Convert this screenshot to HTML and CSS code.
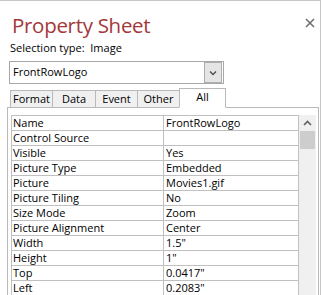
FILE: index.html
```html
<!DOCTYPE html>
<html lang="en">
<head>
    <meta charset="UTF-8">
    <meta name="viewport" content="width=device-width, initial-scale=1.0">
    <title>Property Sheet</title>
    <link rel="stylesheet" href="styles.css">
</head>
<body>
    <div class="sheet">
        <div class="sheet-head">
            <h1>Property Sheet</h1>
            <span class="close">
                <svg width="10" height="10" viewBox="0 0 10 10"><path d="M1 1L9 9M9 1L1 9" stroke="#707070" stroke-width="1.6" fill="none"/></svg>
            </span>
        </div>
        <div class="selection">Selection type:&nbsp; Image</div>

        <div class="picker">
            <span class="picker-text">FrontRowLogo</span>
            <span class="picker-btn">
                <svg width="8" height="6" viewBox="0 0 8 6"><path d="M1 1.5L4 4.5L7 1.5" stroke="#505050" stroke-width="1.4" fill="none"/></svg>
            </span>
        </div>

        <div class="tabs">
            <span class="tab w43">Format</span>
            <span class="tab w44">Data</span>
            <span class="tab w43">Event</span>
            <span class="tab w43">Other</span>
            <span class="tab active">All</span>
        </div>

        <div class="panel">
            <table class="props">
                <tr><td>Name</td><td>FrontRowLogo</td></tr>
                <tr><td>Control Source</td><td></td></tr>
                <tr><td>Visible</td><td>Yes</td></tr>
                <tr><td>Picture Type</td><td>Embedded</td></tr>
                <tr><td>Picture</td><td>Movies1.gif</td></tr>
                <tr><td>Picture Tiling</td><td>No</td></tr>
                <tr><td>Size Mode</td><td>Zoom</td></tr>
                <tr><td>Picture Alignment</td><td>Center</td></tr>
                <tr><td>Width</td><td>1.5"</td></tr>
                <tr><td>Height</td><td>1"</td></tr>
                <tr><td>Top</td><td>0.0417"</td></tr>
                <tr><td>Left</td><td>0.2083"</td></tr>
            </table>
            <div class="scroll">
                <span class="scroll-up">
                    <svg width="9" height="6" viewBox="0 0 9 6"><path d="M1 5L4.5 1.5L8 5" stroke="#606060" stroke-width="1.6" fill="none"/></svg>
                </span>
                <span class="thumb"></span>
            </div>
        </div>
    </div>
</body>
</html>
```

FILE: styles.css
```css
body {
    margin: 0;
    font-family: "Open Sans", sans-serif;
    font-size: 11px;
    color: #000;
    background: #fff;
}
.sheet {
    width: 321px;
    height: 295px;
    box-sizing: border-box;
    border-top: 1px solid #c6c6c6;
    border-right: 1px solid #c6c6c6;
    overflow: hidden;
}
.sheet-head {
    display: flex;
    justify-content: space-between;
    align-items: flex-start;
    padding: 10px 5px 0 12px;
}
h1 {
    margin: 0;
    font-size: 20.5px;
    letter-spacing: -0.3px;
    line-height: 28px;
    font-weight: normal;
    color: #a4373a;
}
.close {
    display: flex;
    margin-top: 7px;
}
.selection {
    margin: 2px 0 0 10px;
    line-height: 14px;
}
.picker {
    display: flex;
    align-items: center;
    justify-content: space-between;
    margin: 6px 0 0 9px;
    width: 215px;
    height: 23px;
    box-sizing: border-box;
    border: 1px solid #a8a8a8;
    padding-right: 1px;
}
.picker-text {
    padding-left: 3px;
    line-height: 20px;
    padding-bottom: 1px;
}
.picker-btn {
    display: flex;
    align-items: center;
    justify-content: center;
    width: 18px;
    height: 21px;
    box-sizing: border-box;
    border: 1px solid #adadad;
    background: #e5e5e5;
}
.tabs {
    display: flex;
    align-items: flex-end;
    margin: 4px 0 -1px 10px;
    position: relative;
}
.tab {
    box-sizing: border-box;
    height: 18px;
    line-height: 16px;
    border: 1px solid #b9b9b9;
    margin-right: -1px;
    background: #f0f0f0;
    text-align: center;
}
.w43 { width: 43px; }
.w44 { width: 44px; }
.tab.active {
    width: 47px;
    height: 20px;
    padding-bottom: 2px;
    background: #fff;
    border-bottom-color: #fff;
}
.panel {
    display: flex;
    align-items: flex-start;
    margin-left: 7px;
    width: 312px;
    height: 200px;
    box-sizing: border-box;
    border: 1px solid #b9b9b9;
    padding: 7px 2px 0 3px;
}
.props {
    width: 288px;
    border-collapse: collapse;
    table-layout: fixed;
}
.props td {
    height: 14px;
    line-height: 14px;
    padding: 0 0 0 1px;
    border: 1px solid #c0c0c0;
    white-space: nowrap;
    overflow: hidden;
}
.props td:first-child {
    width: 150px;
}
.props td + td {
    padding-left: 2px;
}
.scroll {
    display: flex;
    flex-direction: column;
    align-items: center;
    width: 17px;
    height: 190px;
    background: #f0f0f0;
}
.scroll-up {
    display: flex;
    align-items: center;
    justify-content: center;
    height: 15px;
    width: 17px;
}
.thumb {
    margin-top: 1px;
    width: 15px;
    height: 18px;
    background: #cdcdcd;
}
```
